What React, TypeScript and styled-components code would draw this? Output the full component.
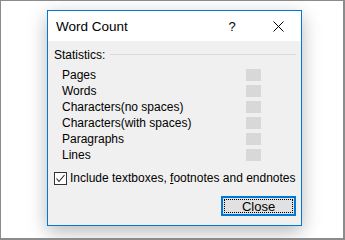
import React from "react";
import styled, { createGlobalStyle } from "styled-components";

const GlobalStyle = createGlobalStyle`
	html, body {
		margin: 0;
		padding: 0;
		background: #ffffff;
	}
	body {
		font-family: "Liberation Sans", Arial, sans-serif;
	}
`;

const Frame = styled.div`
	box-sizing: border-box;
	width: 345px;
	height: 240px;
	border-style: solid;
	border-color: #8c8c8c;
	border-width: 1px 2px 2px 1px;
	background: #ffffff;
	padding: 9px 0 0 46px;
	overflow: hidden;
`;

const Dialog = styled.div`
	box-sizing: border-box;
	width: 255px;
	height: 216px;
	border: 1px solid #0078d7;
	background: #f0f0f0;
	box-shadow: 0 6px 18px rgba(0, 0, 0, 0.28);
	display: flex;
	flex-direction: column;
	color: #000000;
	font-size: 12px;
	white-space: nowrap;
`;

const TitleBar = styled.div`
	height: 30px;
	background: #ffffff;
	display: flex;
	align-items: center;
	padding-left: 8px;
`;

const Title = styled.div`
	flex: 1;
	font-size: 13.5px;
`;

const TitleButton = styled.div`
	width: 46px;
	height: 30px;
	display: flex;
	align-items: center;
	justify-content: center;
	font-size: 13px;
`;

const Body = styled.div`
	flex: 1;
	display: flex;
	flex-direction: column;
	padding: 6px 5px 9px 6px;
`;

const GroupHeader = styled.div`
	display: flex;
	align-items: center;
	gap: 5px;
	height: 16px;
	margin-bottom: 4px;
`;

const Rule = styled.div`
	flex: 1;
	height: 1px;
	background: #dadada;
	margin-top: -1px;
`;

const StatRow = styled.div`
	display: flex;
	align-items: center;
	height: 16px;
	padding-left: 8px;
`;

const StatLabel = styled.div`
	flex: 1;
`;

const StatValue = styled.div`
	width: 15px;
	height: 12px;
	background: #d8d8d8;
	margin-right: 35px;
`;

const CheckRow = styled.label`
	display: flex;
	align-items: center;
	gap: 3px;
	height: 16px;
	margin-top: 7px;
`;

const CheckBox = styled.span`
	box-sizing: border-box;
	width: 13px;
	height: 13px;
	border: 1px solid #333333;
	background: #ffffff;
	display: flex;
	align-items: center;
	justify-content: center;
`;

const AccessKey = styled.span`
	text-decoration: underline;
`;

const Footer = styled.div`
	margin-top: auto;
	display: flex;
	justify-content: flex-end;
`;

const Button = styled.button`
	box-sizing: border-box;
	width: 75px;
	height: 20px;
	border: 2px solid #0078d7;
	background: #e1e1e1;
	padding: 1px;
	font-family: inherit;
	font-size: 13px;
	color: #000000;
	display: flex;
`;

const FocusRect = styled.span`
	flex: 1;
	border: 1px dotted #000000;
	display: flex;
	align-items: center;
	justify-content: center;
`;

const stats = [
	"Pages",
	"Words",
	"Characters(no spaces)",
	"Characters(with spaces)",
	"Paragraphs",
	"Lines",
];

const App: React.FC = () => {
	return (
		<>
			<GlobalStyle />
			<Frame>
				<Dialog>
					<TitleBar>
						<Title>Word Count</Title>
						<TitleButton>?</TitleButton>
						<TitleButton>
							<svg width="11" height="11" viewBox="0 0 11 11">
								<path d="M0.5 0.5 L10.5 10.5 M10.5 0.5 L0.5 10.5" stroke="#000" strokeWidth="1" fill="none" />
							</svg>
						</TitleButton>
					</TitleBar>
					<Body>
						<GroupHeader>
							<span>Statistics:</span>
							<Rule />
						</GroupHeader>
						{stats.map((label) => (
							<StatRow key={label}>
								<StatLabel>{label}</StatLabel>
								<StatValue />
							</StatRow>
						))}
						<CheckRow>
							<CheckBox>
								<svg width="11" height="11" viewBox="0 0 11 11">
									<path d="M1.5 5.5 L4 8.5 L9.5 2" stroke="#222" strokeWidth="1.1" fill="none" />
								</svg>
							</CheckBox>
							<span>
								Include textboxes, <AccessKey>f</AccessKey>ootnotes and endnotes
							</span>
						</CheckRow>
						<Footer>
							<Button>
								<FocusRect>Close</FocusRect>
							</Button>
						</Footer>
					</Body>
				</Dialog>
			</Frame>
		</>
	);
};

export default App;
